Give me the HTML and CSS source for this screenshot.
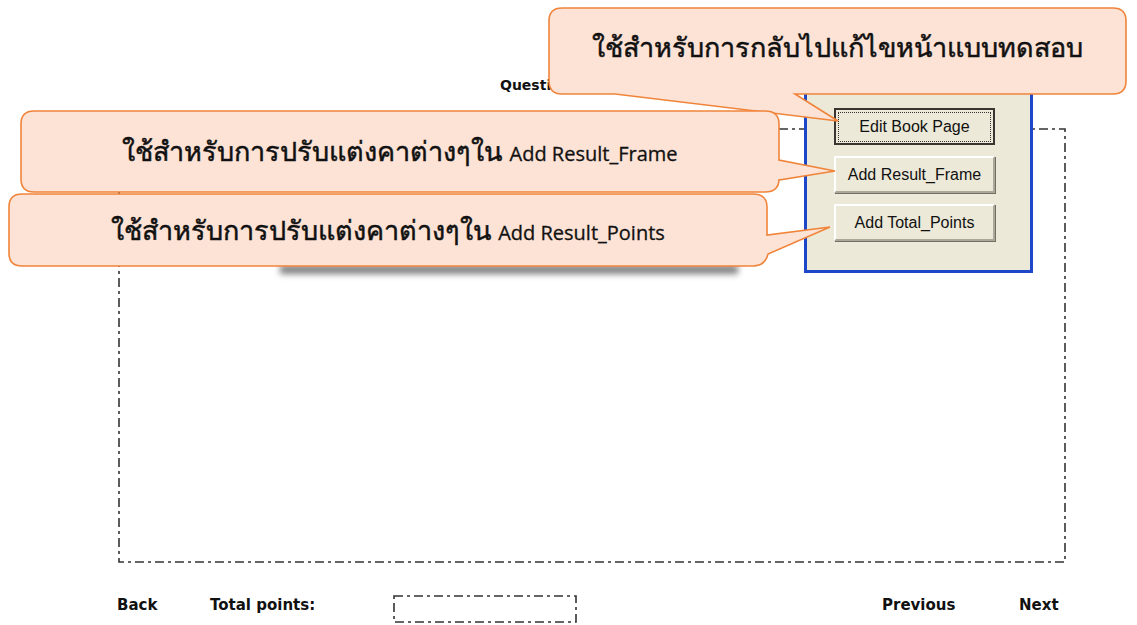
FILE: index.html
```html
<!DOCTYPE html>
<html>
<head>
  <meta charset="UTF-8">
  <title>Result Page</title>
  <link rel="stylesheet" href="styles.css">
</head>
<body>
  <!-- Book page: title, result frame and footer -->
  <div id="page">
    <div id="title">Question</div>

    <div id="resultFrame">
      <svg class="dashLine" width="100%" height="100%">
        <rect x="1" y="1" width="946" height="433" fill="none" stroke="#333" stroke-width="1.6" stroke-dasharray="9 4 3 4"/>
      </svg>
    </div>

    <div id="footer">
      <span class="link back">Back</span>
      <span class="link total">Total points:</span>
      <div id="pointsBox">
        <svg class="dashLine" width="100%" height="100%">
          <rect x="1" y="1" width="182" height="26" fill="none" stroke="#333" stroke-width="1.6" stroke-dasharray="9 4 3 4"/>
        </svg>
      </div>
      <span class="link prev">Previous</span>
      <span class="link next">Next</span>
    </div>
  </div>

  <!-- Floating tool window -->
  <div id="toolPanel">
    <button class="winBtn focused"><span>Edit Book Page</span></button>
    <button class="winBtn"><span>Add Result_Frame</span></button>
    <button class="winBtn"><span>Add Total_Points</span></button>
  </div>

  <!-- Callouts -->
  <div class="callout c1">
    <svg class="bubble" width="579" height="88">
      <path d="M14,1 H565 Q578,1 578,14 V74 Q578,87 565,87 H247 L290,114 L67,87 H14 Q1,87 1,74 V14 Q1,1 14,1 Z"/>
    </svg>
    <span class="calloutText">ใช้สำหรับการกลับไปแก้ไขหน้าแบบทดสอบ</span>
  </div>

  <div class="callout c2">
    <svg class="bubble" width="760" height="83">
      <path d="M14,1 H745 Q759,1 759,14 V50 L815,61 L759,70 V69 Q759,82 745,82 H14 Q1,82 1,69 V14 Q1,1 14,1 Z"/>
    </svg>
    <span class="calloutText">ใช้สำหรับการปรับแต่งคาต่างๆใน <span class="latin">Add Result_Frame</span></span>
  </div>

  <div class="callout c3">
    <svg class="bubble" width="760" height="74">
      <path d="M14,1 H745 Q759,1 759,14 V42 L822,34 L760,61 Q757,73 745,73 H14 Q1,73 1,60 V14 Q1,1 14,1 Z"/>
    </svg>
    <span class="calloutText">ใช้สำหรับการปรับแต่งคาต่างๆใน <span class="latin">Add Result_Points</span></span>
  </div>
</body>
</html>
```

FILE: styles.css
```css
body {
  margin: 0;
  padding: 0;
  background: #ffffff;
  font-family: "Liberation Sans", Arial, sans-serif;
  width: 1137px;
  height: 625px;
  overflow: hidden;
  position: relative;
}

#page {
  padding-top: 77px;
}

#title {
  margin-left: 500px;
  font-family: "DejaVu Sans", Tahoma, sans-serif;
  font-size: 14px;
  font-weight: bold;
  color: #111;
  height: 17px;
  line-height: 17px;
}

/* Dash-dot result frame */
#resultFrame {
  position: relative;
  margin: 34px 0 0 118px;
  width: 948px;
  height: 435px;
}
.dashLine {
  position: absolute;
  top: 0;
  left: 0;
}

/* Footer row */
#footer {
  display: flex;
  align-items: center;
  margin-top: 32px;
  padding-left: 117px;
  height: 28px;
}
.link {
  font-family: "DejaVu Sans", Tahoma, sans-serif;
  font-size: 15px;
  font-weight: bold;
  color: #111;
  margin-top: -8px;
}
.back { width: 93px; }
.total { width: 183px; }
#pointsBox {
  position: relative;
  width: 184px;
  height: 28px;
  margin-right: 305px;
}
.prev { width: 137px; }

/* Tool window */
#toolPanel {
  position: absolute;
  left: 804px;
  top: 60px;
  width: 229px;
  height: 213px;
  box-sizing: border-box;
  background: #ece9d8;
  border: 3px solid #1c47c8;
  display: flex;
  flex-direction: column;
  align-items: flex-start;
  padding: 45px 0 0 27px;
  gap: 11px;
}
.winBtn {
  width: 161px;
  height: 37px;
  background: #ece9d8;
  border-top: 2px solid #fff;
  border-left: 2px solid #fff;
  border-right: 2px solid #aca899;
  border-bottom: 2px solid #aca899;
  box-shadow: 1px 1px 0 #716f64;
  font-family: "Liberation Sans", Tahoma, sans-serif;
  font-size: 16px;
  color: #111;
  padding: 0;
}
.winBtn.focused {
  border: 2px solid #3a3530;
  box-shadow: none;
}
.winBtn.focused span {
  display: block;
  margin: 2px;
  padding: 5px 0;
  border: 1px dotted #333;
}

/* Callouts */
.callout {
  position: absolute;
  display: flex;
  align-items: center;
  justify-content: center;
}
.bubble {
  position: absolute;
  top: 0;
  left: 0;
  overflow: visible;
}
.bubble path {
  fill: #fde3d6;
  stroke: #f0843a;
  stroke-width: 1.6;
}
.calloutText {
  position: relative;
  font-family: "Noto Sans", "DejaVu Sans", sans-serif;
  font-size: 27px;
  font-weight: normal;
  -webkit-text-stroke: 0.5px #111;
  color: #111;
  white-space: nowrap;
}
.latin {
  font-family: "Open Sans", sans-serif;
  font-size: 20px;
  font-weight: normal;
  -webkit-text-stroke: 0.3px #111;
}
.c1 {
  left: 548px;
  top: 7px;
  width: 579px;
  height: 88px;
  padding-bottom: 8px;
  box-sizing: border-box;
  z-index: 2;
}
.c2 {
  left: 20px;
  top: 110px;
  width: 760px;
  height: 83px;
  z-index: 3;
}
.c3 {
  left: 8px;
  top: 193px;
  width: 760px;
  height: 74px;
  z-index: 4;
}
.c3::before {
  content: "";
  position: absolute;
  left: 272px;
  right: 30px;
  bottom: -7px;
  height: 9px;
  background: rgba(0, 0, 0, 0.5);
  filter: blur(3px);
  z-index: -1;
}
```
